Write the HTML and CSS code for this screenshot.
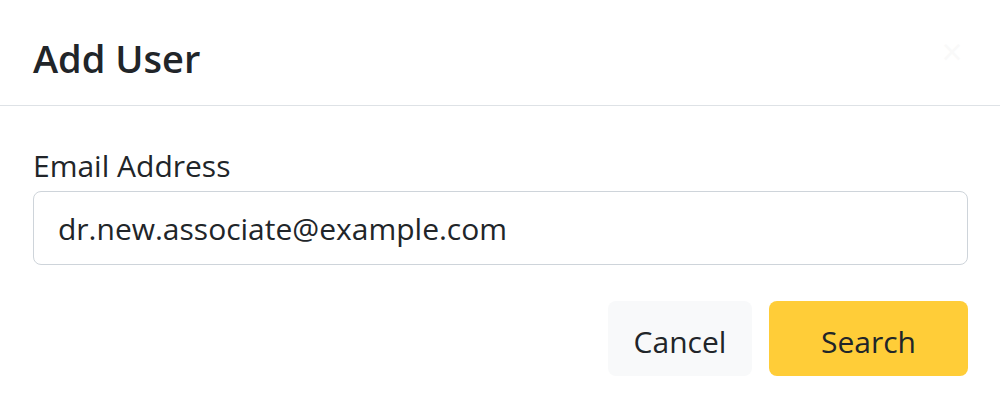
FILE: index.html
```html
<!DOCTYPE html>
<html lang="en">
<head>
<meta charset="utf-8">
<title>Add User</title>
<link rel="stylesheet" href="styles.css">
</head>
<body>
<div class="modal">
  <div class="modal-header">
    <h5 class="modal-title">Add User</h5>
    <button type="button" class="btn-close" aria-label="Close">×</button>
  </div>
  <div class="modal-body">
    <label class="form-label" for="email">Email Address</label>
    <input class="form-control" id="email" type="email" value="dr.new.associate@example.com">
    <div class="actions">
      <button type="button" class="btn btn-light">Cancel</button>
      <button type="button" class="btn btn-warning">Search</button>
    </div>
  </div>
</div>
</body>
</html>
```

FILE: styles.css
```css
html, body {
  margin: 0;
  padding: 0;
  background: #ffffff;
}
body {
  font-family: "Open Sans", "Noto Sans", "Liberation Sans", sans-serif;
  color: #212529;
}
.modal {
  width: 1000px;
  height: 410px;
  background: #ffffff;
}
.modal-header {
  display: flex;
  align-items: flex-start;
  justify-content: space-between;
  padding: 28px 32px 17px 33px;
  border-bottom: 1px solid #dee2e6;
}
.modal-title {
  margin: 0;
  font-size: 38px;
  line-height: 60px;
  font-weight: 600;
}
.btn-close {
  width: 32px;
  height: 32px;
  margin-top: 8px;
  padding: 0;
  border: 0;
  background: transparent;
  color: #f9f9f9;
  font-size: 36px;
  line-height: 32px;
  font-family: "Open Sans", sans-serif;
}
.modal-body {
  padding: 36px 32px 0 33px;
  display: flex;
  flex-direction: column;
}
.form-label {
  font-size: 30px;
  line-height: 48px;
  margin-bottom: 1px;
}
.form-control {
  box-sizing: border-box;
  height: 74px;
  width: 100%;
  padding: 0 24px;
  border: 1px solid #ced4da;
  border-radius: 8px;
  font-family: inherit;
  font-size: 30px;
  color: #212529;
  background: #ffffff;
  outline: none;
}
.actions {
  display: flex;
  justify-content: flex-end;
  gap: 17px;
  margin-top: 36px;
}
.btn {
  box-sizing: border-box;
  height: 75px;
  border: 0;
  border-radius: 8px;
  font-family: inherit;
  font-size: 30px;
  color: #212529;
  padding: 5px 0 0;
}
.btn-light {
  background: #f8f9fa;
  width: 144px;
}
.btn-warning {
  background: #ffcd38;
  width: 199px;
}
```
